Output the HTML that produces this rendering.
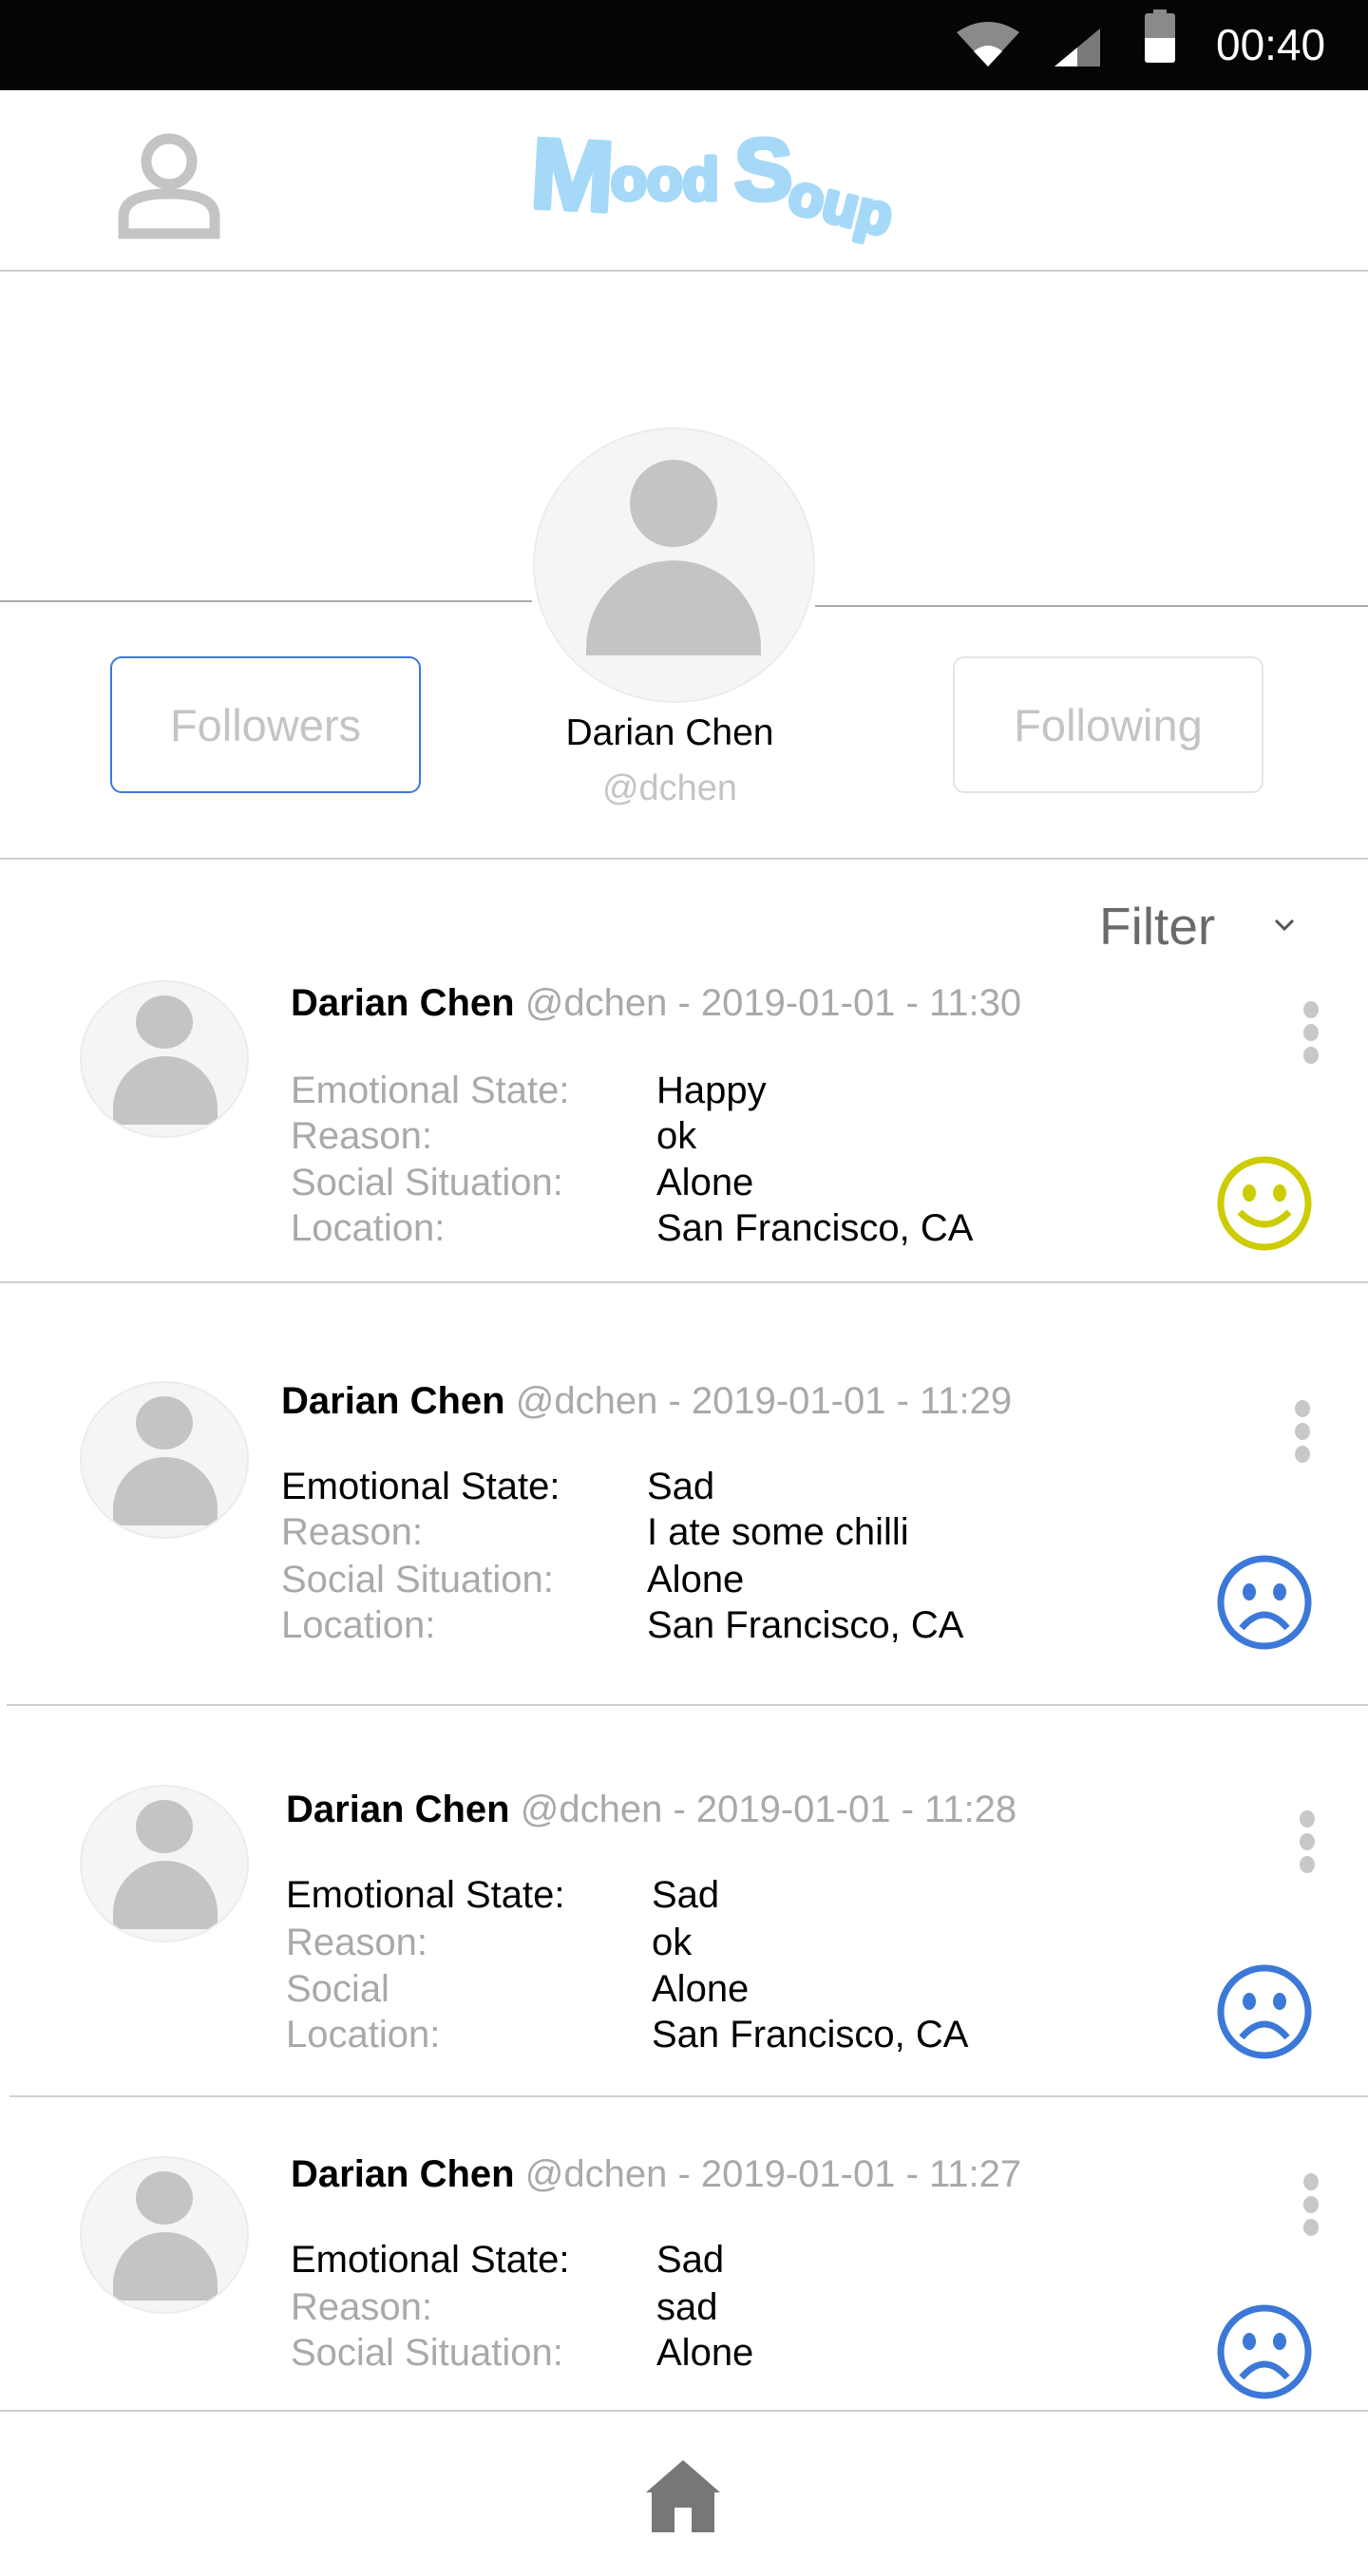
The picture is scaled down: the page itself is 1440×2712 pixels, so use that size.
<!DOCTYPE html>
<html><head><meta charset="utf-8"><style>
*{margin:0;padding:0;box-sizing:border-box}
body{width:1440px;height:2712px;background:#fff;position:relative;overflow:hidden;font-family:"Liberation Sans",Arial,sans-serif}
.a{position:absolute}
.t{position:absolute;white-space:nowrap;font-size:40px;line-height:44px}
.g{color:#a9a9a9}.k{color:#000}
.hr{position:absolute;left:0;right:0;height:2px;background:#cfcfcf}
.av{position:absolute;width:178px;height:166px;border-radius:50%;background:#f5f5f5;border:2px solid #ececec;overflow:hidden}
.dots{position:absolute;width:16px}
.dots i{display:block;width:16px;height:18px;border-radius:50%;background:#c8c8c8;margin-bottom:6px}
</style></head><body>
<!-- status bar -->
<div class="a" style="left:0;top:0;width:1440px;height:95px;background:#050505"></div>
<svg class="a" style="left:1005px;top:20px" width="70" height="50" viewBox="0 0 70 50"><path d="M2 14 Q35 -8 68 14 L35 50 Z" fill="#8a8a8a"/><path d="M20 34 Q35 22 50 34 L35 50Z" fill="#fff"/></svg>
<svg class="a" style="left:1110px;top:30px" width="52" height="40"><path d="M0 40 L48 0 L48 40Z" fill="#7a7a7a"/><path d="M0 40 L24 20 L24 40Z" fill="#fff"/></svg>
<div class="a" style="left:1205px;top:14px;width:32px;height:52px;border-radius:3px;background:#8a8a8a"></div>
<div class="a" style="left:1214px;top:10px;width:14px;height:6px;background:#8a8a8a"></div>
<div class="a" style="left:1205px;top:40px;width:32px;height:26px;background:#fff;border-radius:0 0 3px 3px"></div>
<div class="t" style="left:1280px;top:22px;color:#fff;font-size:46px;line-height:50px">00:40</div>
<!-- header -->
<svg class="a" style="left:122px;top:140px" width="116" height="112" viewBox="0 0 116 112"><circle cx="56" cy="30" r="24" fill="none" stroke="#c4c4c4" stroke-width="11"/><path d="M8 106 L8 88 Q8 64 56 64 Q104 64 104 88 L104 106Z" fill="none" stroke="#c4c4c4" stroke-width="11"/></svg>
<svg class="a" style="left:555px;top:110px" width="400" height="170" viewBox="0 0 400 170"><g fill="#a6d9f8" stroke="#a6d9f8" stroke-width="5" stroke-linejoin="round" font-family="Liberation Sans" font-weight="bold"><text x="2" y="108" font-size="105" transform="rotate(3 0 110)">M</text><text x="88" y="100" font-size="62">ood</text><text x="218" y="100" font-size="92">S</text><text x="272" y="112" font-size="60" transform="rotate(14 272 112)">oup</text></g></svg>
<div class="hr" style="top:284px"></div>
<!-- profile -->
<div class="hr" style="top:632px;right:auto;width:560px;background:#aaa"></div>
<div class="hr" style="top:637px;left:858px;background:#aaa"></div>
<div class="a" style="left:561px;top:450px;width:297px;height:290px;border-radius:50%;background:#f5f5f5;border:2px solid #ececec"></div>
<div class="a" style="left:663px;top:484px;width:92px;height:92px;border-radius:50%;background:#c4c4c4"></div>
<div class="a" style="left:617px;top:590px;width:184px;height:100px;border-radius:92px 92px 0 0;background:#c4c4c4"></div>
<div class="a" style="left:116px;top:691px;width:327px;height:144px;border:2px solid #3c78d8;border-radius:12px"></div>
<div class="t" style="left:116px;width:327px;text-align:center;top:738px;font-size:47px;line-height:52px;color:#c4c4c4">Followers</div>
<div class="a" style="left:1003px;top:691px;width:327px;height:144px;border:2px solid #e4e4e4;border-radius:12px"></div>
<div class="t" style="left:1003px;width:327px;text-align:center;top:738px;font-size:47px;line-height:52px;color:#c4c4c4">Following</div>
<div class="t k" style="left:505px;width:400px;text-align:center;top:750px;font-size:39px">Darian Chen</div>
<div class="t" style="left:505px;width:400px;text-align:center;top:808px;font-size:38px;color:#c4c4c4">@dchen</div>
<div class="hr" style="top:903px"></div>
<div class="t" style="left:1157px;top:945px;font-size:55px;line-height:60px;color:#6a6a6a">Filter</div>
<svg class="a" style="left:1340px;top:966px" width="24" height="16"><path d="M3 3 L12 12 L21 3" fill="none" stroke="#555" stroke-width="3"/></svg>

<!-- card 1 -->
<div class="av" style="left:84px;top:1032px"><div class="a" style="left:57px;top:14px;width:60px;height:56px;border-radius:50%;background:#c4c4c4"></div><div class="a" style="left:33px;top:78px;width:110px;height:72px;border-radius:55px 55px 0 0;background:#c4c4c4"></div></div>
<div class="t" style="left:306px;top:1034px"><b>Darian Chen</b> <span class="g">@dchen - 2019-01-01 - 11:30</span></div>
<div class="t g" style="left:306px;top:1126px">Emotional State:</div><div class="t k" style="left:691px;top:1126px">Happy</div>
<div class="t g" style="left:306px;top:1174px">Reason:</div><div class="t k" style="left:691px;top:1174px">ok</div>
<div class="t g" style="left:306px;top:1223px">Social Situation:</div><div class="t k" style="left:691px;top:1223px">Alone</div>
<div class="t g" style="left:306px;top:1271px">Location:</div><div class="t k" style="left:691px;top:1271px">San Francisco, CA</div>
<div class="dots" style="left:1372px;top:1054px"><i></i><i></i><i></i></div>
<svg class="a" style="left:1280px;top:1216px" width="102" height="102"><circle cx="51" cy="51" r="46" fill="none" stroke="#cccc00" stroke-width="7"/><ellipse cx="35" cy="40" rx="7" ry="9" fill="#cccc00"/><ellipse cx="67" cy="40" rx="7" ry="9" fill="#cccc00"/><path d="M25 60 Q51 86 77 60" fill="none" stroke="#cccc00" stroke-width="7"/></svg>
<div class="hr" style="top:1349px"></div>

<!-- card 2 -->
<div class="av" style="left:84px;top:1454px"><div class="a" style="left:57px;top:14px;width:60px;height:56px;border-radius:50%;background:#c4c4c4"></div><div class="a" style="left:33px;top:78px;width:110px;height:72px;border-radius:55px 55px 0 0;background:#c4c4c4"></div></div>
<div class="t" style="left:296px;top:1453px"><b>Darian Chen</b> <span class="g">@dchen - 2019-01-01 - 11:29</span></div>
<div class="t k" style="left:296px;top:1543px">Emotional State:</div><div class="t k" style="left:681px;top:1543px">Sad</div>
<div class="t g" style="left:296px;top:1591px">Reason:</div><div class="t k" style="left:681px;top:1591px">I ate some chilli</div>
<div class="t g" style="left:296px;top:1641px">Social Situation:</div><div class="t k" style="left:681px;top:1641px">Alone</div>
<div class="t g" style="left:296px;top:1689px">Location:</div><div class="t k" style="left:681px;top:1689px">San Francisco, CA</div>
<div class="dots" style="left:1363px;top:1474px"><i></i><i></i><i></i></div>
<svg class="a" style="left:1280px;top:1636px" width="102" height="102"><circle cx="51" cy="51" r="46" fill="none" stroke="#3c78d8" stroke-width="7"/><ellipse cx="35" cy="40" rx="7" ry="9" fill="#3c78d8"/><ellipse cx="67" cy="40" rx="7" ry="9" fill="#3c78d8"/><path d="M27 78 Q51 50 75 78" fill="none" stroke="#3c78d8" stroke-width="7"/></svg>
<div class="hr" style="top:1794px;left:7px"></div>

<!-- card 3 -->
<div class="av" style="left:84px;top:1879px"><div class="a" style="left:57px;top:14px;width:60px;height:56px;border-radius:50%;background:#c4c4c4"></div><div class="a" style="left:33px;top:78px;width:110px;height:72px;border-radius:55px 55px 0 0;background:#c4c4c4"></div></div>
<div class="t" style="left:301px;top:1883px"><b>Darian Chen</b> <span class="g">@dchen - 2019-01-01 - 11:28</span></div>
<div class="t k" style="left:301px;top:1973px">Emotional State:</div><div class="t k" style="left:686px;top:1973px">Sad</div>
<div class="t g" style="left:301px;top:2023px">Reason:</div><div class="t k" style="left:686px;top:2023px">ok</div>
<div class="t g" style="left:301px;top:2072px">Social</div><div class="t k" style="left:686px;top:2072px">Alone</div>
<div class="t g" style="left:301px;top:2120px">Location:</div><div class="t k" style="left:686px;top:2120px">San Francisco, CA</div>
<div class="dots" style="left:1368px;top:1906px"><i></i><i></i><i></i></div>
<svg class="a" style="left:1280px;top:2067px" width="102" height="102"><circle cx="51" cy="51" r="46" fill="none" stroke="#3c78d8" stroke-width="7"/><ellipse cx="35" cy="40" rx="7" ry="9" fill="#3c78d8"/><ellipse cx="67" cy="40" rx="7" ry="9" fill="#3c78d8"/><path d="M27 78 Q51 50 75 78" fill="none" stroke="#3c78d8" stroke-width="7"/></svg>
<div class="hr" style="top:2206px;left:10px"></div>

<!-- card 4 -->
<div class="av" style="left:84px;top:2270px"><div class="a" style="left:57px;top:14px;width:60px;height:56px;border-radius:50%;background:#c4c4c4"></div><div class="a" style="left:33px;top:78px;width:110px;height:72px;border-radius:55px 55px 0 0;background:#c4c4c4"></div></div>
<div class="t" style="left:306px;top:2267px"><b>Darian Chen</b> <span class="g">@dchen - 2019-01-01 - 11:27</span></div>
<div class="t k" style="left:306px;top:2357px">Emotional State:</div><div class="t k" style="left:691px;top:2357px">Sad</div>
<div class="t g" style="left:306px;top:2407px">Reason:</div><div class="t k" style="left:691px;top:2407px">sad</div>
<div class="t g" style="left:306px;top:2455px">Social Situation:</div><div class="t k" style="left:691px;top:2455px">Alone</div>
<div class="dots" style="left:1372px;top:2288px"><i></i><i></i><i></i></div>
<svg class="a" style="left:1280px;top:2425px" width="102" height="102"><circle cx="51" cy="51" r="46" fill="none" stroke="#3c78d8" stroke-width="7"/><ellipse cx="35" cy="40" rx="7" ry="9" fill="#3c78d8"/><ellipse cx="67" cy="40" rx="7" ry="9" fill="#3c78d8"/><path d="M27 78 Q51 50 75 78" fill="none" stroke="#3c78d8" stroke-width="7"/></svg>
<div class="hr" style="top:2537px"></div>

<!-- home -->
<svg class="a" style="left:680px;top:2590px" width="78" height="76" viewBox="0 0 78 76"><path d="M39 0 L78 34 L72 34 L72 76 L48 76 L48 50 L30 50 L30 76 L6 76 L6 34 L0 34Z" fill="#777"/></svg>
</body></html>
